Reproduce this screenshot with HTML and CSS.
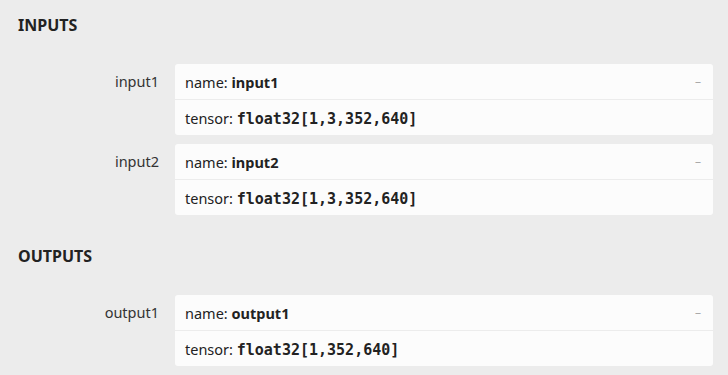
FILE: index.html
```html
<!DOCTYPE html>
<html lang="en">

<head>
    <meta charset="UTF-8">
    <meta name="viewport" content="width=device-width, initial-scale=1.0">
    <title>Model Properties</title>
    <link rel="stylesheet" href="styles.css">
</head>

<body>
    <div class="sidebar">
        <!-- Inputs -->
        <div class="section">
            <div class="section-title">INPUTS</div>
            <div class="item">
                <div class="item-name">input1</div>
                <div class="item-value">
                    <div class="value-row">
                        <span>name: <b>input1</b></span>
                        <span class="toggle">&ndash;</span>
                    </div>
                    <div class="value-row">
                        <span>tensor: <code>float32[1,3,352,640]</code></span>
                    </div>
                </div>
            </div>
            <div class="item">
                <div class="item-name">input2</div>
                <div class="item-value">
                    <div class="value-row">
                        <span>name: <b>input2</b></span>
                        <span class="toggle">&ndash;</span>
                    </div>
                    <div class="value-row">
                        <span>tensor: <code>float32[1,3,352,640]</code></span>
                    </div>
                </div>
            </div>
        </div>

        <!-- Outputs -->
        <div class="section">
            <div class="section-title">OUTPUTS</div>
            <div class="item">
                <div class="item-name">output1</div>
                <div class="item-value">
                    <div class="value-row">
                        <span>name: <b>output1</b></span>
                        <span class="toggle">&ndash;</span>
                    </div>
                    <div class="value-row">
                        <span>tensor: <code>float32[1,352,640]</code></span>
                    </div>
                </div>
            </div>
        </div>
    </div>
</body>

</html>
```

FILE: styles.css
```css
* {
    margin: 0;
    padding: 0;
    box-sizing: border-box;
}

body {
    font-family: 'Noto Sans', 'Open Sans', sans-serif;
    font-size: 14.5px;
    color: #222;
    background: #ececec;
    overflow: hidden;
}

.sidebar {
    padding: 15px 15px 0 18px;
}

.section {
    margin-bottom: 31px;
}

.section:last-child {
    margin-bottom: 0;
}

.section-title {
    font-weight: 700;
    font-size: 16px;
    line-height: 20px;
    color: #222;
    margin-bottom: 29px;
}

.item {
    display: flex;
    gap: 16px;
    margin-bottom: 9px;
}

.item:last-child {
    margin-bottom: 0;
}

.item-name {
    width: 141px;
    flex-shrink: 0;
    text-align: right;
    line-height: 35px;
    color: #333;
}

.item-value {
    flex: 1;
    background: #fcfcfc;
    border-radius: 3px;
}

.value-row {
    display: flex;
    justify-content: space-between;
    align-items: center;
    height: 35px;
    padding: 0 12px 0 10px;
}

.value-row + .value-row {
    border-top: 1px solid #ececec;
    height: 36px;
}

.value-row b {
    font-weight: 700;
}

.value-row code {
    font-family: 'DejaVu Sans Mono', 'Liberation Mono', monospace;
    font-weight: 700;
    font-size: 15px;
}

.toggle {
    color: #aaa;
    font-size: 12px;
}
```
